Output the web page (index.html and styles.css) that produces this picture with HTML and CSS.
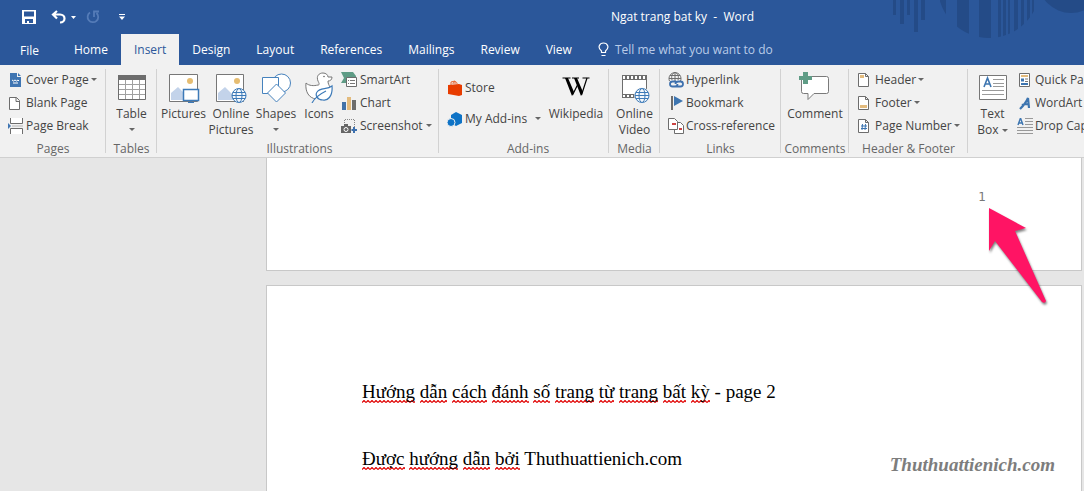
FILE: index.html
```html
<!DOCTYPE html>
<html lang="en">
<head>
<meta charset="utf-8">
<title>Ngat trang bat ky - Word</title>
<link rel="stylesheet" href="styles.css">
</head>
<body>
<header class="top">
  <svg class="pattern" width="200" height="40" viewBox="884 0 200 40" aria-hidden="true">
    <defs><clipPath id="disc"><circle cx="989" cy="-13" r="51"/></clipPath></defs>
    <g fill="#244b87">
      <path d="M893 0h3v15h-3zM900 0h4v24h-4zM907 0h3v15h-3zM914 0h4v32h-4zM921 0h4v20h-4z"/>
      <path clip-path="url(#disc)" d="M940 0h6v20h-6zM957 0h12v40h-12zM979 0h12v40h-12zM998 0h3v40h-3zM1003 0h3v40h-3zM1008 0h2v40h-2zM1014 0h4v40h-4zM1021 0h3v40h-3zM1027 0h3v40h-3zM1032 0h2v40h-2z"/>
      <circle cx="1071" cy="-20" r="33"/>
    </g>
  </svg>
  <div class="titlebar">
    <div class="quick">
      <button class="qbtn" aria-label="Save"><svg width="14" height="14" viewBox="0 0 14 14"><path d="M0 0h14v14H0zM2 1.500v5h10v-5zM3 9v4h2v-2h2v2h4V9z" fill="#fff" fill-rule="evenodd"/></svg></button>
      <button class="qbtn undo" aria-label="Undo"><svg width="15" height="14" viewBox="0 0 15 14"><path d="M6 1L2 4.500l4 4M2.500 4.500H9c6 0 6 8 0 8" fill="none" stroke="#fff" stroke-width="2.200"/></svg></button>
      <button class="qbtn more" aria-label="Undo list"><svg width="5" height="3" viewBox="0 0 5 3"><path d="M0 0h5L2.500 3z" fill="#fff"/></svg></button>
      <button class="qbtn redo" aria-label="Repeat"><svg width="14" height="14" viewBox="0 0 14 14"><path d="M4 2.500A5.300 5.300 0 1 0 10.500 3M8 7V1.500h5" fill="none" stroke="#557cb8" stroke-width="1.800"/></svg></button>
      <button class="qbtn custom" aria-label="Customize Quick Access Toolbar"><svg width="6" height="6" viewBox="0 0 6 6"><path d="M0 0h6v1H0zM0 2.500h6L3 6z" fill="#fff"/></svg></button>
    </div>
    <h1 class="title">Ngat trang bat ky&nbsp; -&nbsp; Word</h1>
  </div>
  <nav class="tabs">
    <button class="tab file">File</button>
    <button class="tab">Home</button>
    <button class="tab active">Insert</button>
    <button class="tab">Design</button>
    <button class="tab">Layout</button>
    <button class="tab">References</button>
    <button class="tab">Mailings</button>
    <button class="tab">Review</button>
    <button class="tab">View</button>
    <button class="tab tell"><svg width="11" height="15" viewBox="0 0 11 15"><path d="M3.500 10.500V9C-1 5.500 1.500 1 5.500 1S12 5.500 7.500 9v1.500zM3.500 13.500h4" fill="none" stroke="#fff" stroke-width="1.200"/></svg>Tell me what you want to do</button>
  </nav>
</header>

<section class="ribbon">
  <div class="group g-pages">
    <div class="items"><div class="stack">
      <button class="small"><svg width="16" height="16" viewBox="0 0 16 16"><path d="M2 1h7v4h4v10H2zM10 1l3 3h-3z" fill="#3f75b2"/><path d="M4 8l1.500 1L7 8l1.500 1L10 8l1 1M5 11h5" stroke="#fff" fill="none"/></svg>Cover Page<i class="caret"></i></button>
      <button class="small"><svg width="16" height="16" viewBox="0 0 16 16"><path d="M1.500 2.500h7l3 3v9h-10zM8 2.500v4h3.500" fill="#fff" stroke="#6d6d6d"/></svg>Blank Page</button>
      <button class="small"><svg width="16" height="16" viewBox="0 0 16 16"><path d="M2.500 0v5.500h12V0M2.500 16v-5.500h12V16" fill="#fff" stroke="#6d6d6d"/><path d="M0 5l3 3-3 3z" fill="#3f75b2"/><path d="M4 8h11" stroke="#b5b5b5"/></svg>Page Break</button>
    </div></div>
    <div class="label">Pages</div>
  </div>
  <div class="group g-tables">
    <div class="items">
      <button class="large"><svg width="32" height="32" viewBox="0 0 32 32"><path d="M2.500 4.500h27v24h-27z" fill="#fff" stroke="#6d6d6d"/><path d="M2 4h28v5H2z" fill="#6d6d6d"/><path d="M9.500 9v19M16.500 9v19M23.500 9v19M3 13.500h26M3 18.500h26M3 23.500h26" stroke="#a0a0a0"/></svg>Table<i class="caret"></i></button>
    </div>
    <div class="label">Tables</div>
  </div>
  <div class="group g-ill">
    <div class="items">
      <button class="large w-pic"><svg width="32" height="32" viewBox="0 0 32 32"><path d="M1.500 3.500h28v27h-28z" fill="#fff" stroke="#777"/><circle cx="22" cy="10" r="3" fill="#e6bd72"/><path d="M3 29V22l7-6 8 8v5z" fill="#c3d3ea"/><path d="M15.500 18.500h15v11h-15z" fill="#fff" stroke="#3d7ab8" stroke-width="1.500"/><path d="M23 29v3M20 31.500h6" stroke="#3d7ab8"/></svg>Pictures</button>
      <button class="large w-online"><svg width="32" height="32" viewBox="0 0 32 32"><path d="M1.500 3.500h27v27h-27z" fill="#fff" stroke="#777"/><circle cx="22" cy="10" r="3" fill="#e6bd72"/><path d="M3 29V22l7-6 8 8v5z" fill="#c3d3ea"/><g fill="#f4f8fc" stroke="#3d7ab8"><circle cx="24" cy="24.500" r="7"/><ellipse cx="24" cy="24.500" rx="3" ry="7"/><path d="M17 24.500h14M18 21.500h12M18 27.500h12"/></g></svg><span>Online<br>Pictures</span></button>
      <button class="large w-shapes"><svg width="32" height="32" viewBox="0 0 32 32"><g fill="#fff" stroke="#4682bd"><circle cx="21.500" cy="12" r="9"/><path d="M2.500 6.500h16v16h-16z"/><path d="M16.500 13l9 9-9 9-9-9z"/></g></svg>Shapes<i class="caret"></i></button>
      <button class="large w-icons"><svg width="32" height="32" viewBox="0 0 32 32"><path d="M13 28C6 27 2 21 3 12c3 3 8 3 12 2 2 0 1-2 0-4-2-5 1-8 5-8 3 0 5 2 5 4h4c0 3-2 4-4 4 0 3 1 4 2 6" fill="#fff" stroke="#777"/><circle cx="21" cy="5.500" r=".8" fill="#666"/><path d="M29 15c1 11-5 15-9 14-6 0-8-5-6-8 3-5 10-2 15-6zM9 32c3-6 8-9 14-12" fill="#fff" stroke="#3d7ab8" stroke-width="1.200"/></svg>Icons</button>
      <div class="stack">
        <button class="small"><svg width="16" height="16" viewBox="0 0 16 16"><path d="M0 0h12l3 4v2H6v5H0l3-5z" fill="#5f9c86"/><path d="M5.500 5.500h10v9h-10z" fill="#fff" stroke="#6d6d6d"/><path d="M7 8.500h1M9 8.500h5M7 11.500h1M9 11.500h5" stroke="#777"/></svg>SmartArt</button>
        <button class="small"><svg width="16" height="16" viewBox="0 0 16 16"><path d="M1 7h4v8H1z" fill="#4272a8"/><path d="M6 2h4v13H6z" fill="#e3bb7d"/><path d="M11 5h4v10h-4z" fill="#6d6d6d"/></svg>Chart</button>
        <button class="small"><svg width="16" height="16" viewBox="0 0 16 16"><path d="M3.500 7V1.500h10V9" fill="none" stroke="#888" stroke-dasharray="1 1"/><path d="M0 8h3V6h4v2h3v7H0z" fill="#666"/><circle cx="5" cy="11.500" r="2" stroke="#fff" fill="#666"/><path d="M13 9v6M10.500 12h5.500" stroke="#3d70ae" stroke-width="2"/></svg>Screenshot<i class="caret"></i></button>
      </div>
    </div>
    <div class="label">Illustrations</div>
  </div>
  <div class="group g-add">
    <div class="items">
      <div class="stack addins">
        <button class="small"><svg width="16" height="16" viewBox="0 0 16 16"><path d="M1 5l11-1 3 1v10l-3 1-11-2z" fill="#e83c00"/><path d="M4 5V2l4-1v3M6 4c0-3 3-3 4-1v2" fill="none" stroke="#e8632f"/></svg>Store</button>
        <button class="small"><svg width="16" height="16" viewBox="0 0 16 16"><path d="M9 1l6 3v8l-6 3-5-3V4z" fill="#0e73c6"/><circle cx="4" cy="11.500" r="4" fill="#0e73c6" stroke="#f1f1f1"/></svg>My Add-ins<i class="caret far"></i></button>
      </div>
      <button class="large w-wiki"><svg width="32" height="32" viewBox="0 0 32 32"><path d="M2.500 7h8M12 7h7M22.500 7h7" stroke="#000" stroke-width="1.200"/><path d="M5 7h3l6 14-2 4zM14 7h3l6 14-2 4z" fill="#000"/><path d="M12.500 24l5-10M21.500 24l5.500-17" stroke="#000" stroke-width="1.200"/></svg>Wikipedia</button>
    </div>
    <div class="label">Add-ins</div>
  </div>
  <div class="group g-media">
    <div class="items">
      <button class="large"><svg width="32" height="32" viewBox="0 0 32 32"><path d="M4 4h25v23H4z" fill="#6d6d6d"/><path d="M5 9h23v14H5zM5 5h2v3H5zM9 5h2v3H9zM13 5h2v3h-2zM17 5h2v3h-2zM21 5h2v3h-2zM25 5h2v3h-2zM5 24h2v2H5zM9 24h2v2H9zM13 24h2v2h-2z" fill="#fff"/><circle cx="24" cy="24.500" r="8" fill="#f1f1f1"/><g fill="#f4f8fc" stroke="#3d7ab8"><circle cx="24" cy="24.500" r="7"/><ellipse cx="24" cy="24.500" rx="3" ry="7"/><path d="M17 24.500h14M18 21.500h12M18 27.500h12"/></g></svg><span>Online<br>Video</span></button>
    </div>
    <div class="label">Media</div>
  </div>
  <div class="group g-links">
    <div class="items"><div class="stack">
      <button class="small"><svg width="16" height="16" viewBox="0 0 16 16"><g fill="none" stroke="#6d6d6d"><path d="M1.500 9a6 6 0 1 1 11 0M1 6.500h12M2 3.500h10M7 0v9M4 8c-1-4 0-6 3-8 3 2 4 4 3 8"/></g><path d="M8 9.500H4.500a2.500 2.500 0 0 0 0 5h2c2 0 3-1 3-2.500M8 14.500h4.500a2.500 2.500 0 0 0 0-5h-2c-2 0-3 1-3 2.500" fill="none" stroke="#3d70ae" stroke-width="1.800"/></svg>Hyperlink</button>
      <button class="small"><svg width="16" height="16" viewBox="0 0 16 16"><path d="M4 1v14" stroke="#6d6d6d" stroke-width="2"/><path d="M6 1l9 5-9 5z" fill="#3d75b0"/></svg>Bookmark</button>
      <button class="small"><svg width="16" height="16" viewBox="0 0 16 16"><path d="M6.500 4.500h6l3 3v8h-9z" fill="#fff" stroke="#6d6d6d"/><path d="M.5.500h6l3 3v8h-9z" fill="#fff" stroke="#6d6d6d"/><path d="M4 5h4v2H4zM11 10h3v2h-3z" fill="#cc4343"/></svg>Cross-reference</button>
    </div></div>
    <div class="label">Links</div>
  </div>
  <div class="group g-comments">
    <div class="items">
      <button class="large"><svg width="32" height="32" viewBox="0 0 32 32"><path d="M6.500 5.500h21q2 0 2 2v13q0 2-2 2H15l-6 6v-6H4.500q-2 0-2-2V8" fill="#fff" stroke="#7a7a7a"/><path d="M0 5h4V1h5v4h4v4H9v4H4V9H0z" fill="#5f9c86"/></svg>Comment</button>
    </div>
    <div class="label">Comments</div>
  </div>
  <div class="group g-hf">
    <div class="items"><div class="stack">
      <button class="small"><svg width="16" height="16" viewBox="0 0 16 16"><path d="M1.500 1.500h7l3 3v10h-10zM8.500 1.500v3h3" fill="#fff" stroke="#6d6d6d"/><path d="M3 3h4v3H3z" fill="#e3bb7d"/></svg>Header<i class="caret"></i></button>
      <button class="small"><svg width="16" height="16" viewBox="0 0 16 16"><path d="M1.500 1.500h7l3 3v10h-10zM8.500 1.500v3h3" fill="#fff" stroke="#6d6d6d"/><path d="M3 10h7v3H3z" fill="#e3bb7d"/></svg>Footer<i class="caret"></i></button>
      <button class="small"><svg width="16" height="16" viewBox="0 0 16 16"><path d="M1.500 1.500h7l3 3v10h-10zM8.500 1.500v3h3" fill="#fff" stroke="#6d6d6d"/><path d="M5.500 6L5 12M8.500 6L8 12M4 8h6M4 10.500h6" stroke="#3d75b0"/></svg>Page Number<i class="caret"></i></button>
    </div></div>
    <div class="label">Header &amp; Footer</div>
  </div>
  <div class="group g-text">
    <div class="items">
      <button class="large w-box"><svg width="32" height="32" viewBox="0 0 32 32"><path d="M2.500 4.500h27v24h-27z" fill="#fff" stroke="#777"/><path d="M7 16l3.500-9 3.500 9M8 13h5" stroke="#3d75b0" stroke-width="1.600" fill="none"/><path d="M16 8.500h11M16 12.500h11M16 15.500h11M5 19.500h22M5 23.500h22" stroke="#9a9a9a"/></svg><span>Text<br>Box<i class="caret"></i></span></button>
      <div class="stack">
        <button class="small"><svg width="16" height="16" viewBox="0 0 16 16"><path d="M2.500 1.500h10v13h-10z" fill="#fff" stroke="#6d6d6d"/><path d="M4 3h7v2H4z" fill="#e3bb7d"/><path d="M4 6.500h3v3H4z" fill="#3d75b0"/><path d="M8 7h3M8 9.500h3" stroke="#777"/><path d="M4 11h7v2H4z" fill="#3d75b0"/></svg>Quick Parts</button>
        <button class="small"><svg width="16" height="16" viewBox="0 0 16 16"><path d="M3 14c3-3 6-6 8-11l1 10M5 10c2-1 4-1 7-1" stroke="#3d75b0" stroke-width="2.200" fill="none"/></svg>WordArt</button>
        <button class="small"><svg width="16" height="16" viewBox="0 0 16 16"><path d="M1 7l2.500-7L6 7M2 5h3" stroke="#3d75b0" stroke-width="1.400" fill="none"/><path d="M8 .5h8M8 3.500h8M8 6.500h8M0 9.500h16M0 12.500h16M0 15.500h16" stroke="#999"/></svg>Drop Cap</button>
      </div>
    </div>
  </div>
</section>

<main class="canvas">
  <article class="page first"><span class="number">1</span></article>
  <article class="page second">
    <p><u>Hướng</u> <u>dẫn</u> <u>cách</u> <u>đánh</u> <u>số</u> <u>trang</u> <u>từ</u> <u>trang</u> <u>bất</u> <u>kỳ</u> - page 2</p>
    <p><u>Được</u> <u>hướng</u> <u>dẫn</u> <u>bởi</u> Thuthuattienich.com</p>
  </article>
  <svg class="pointer" width="66" height="104" viewBox="984 204 66 104" aria-hidden="true"><path d="M989 208l37 20-11 3 31 70q-1 3-4 1l-47-61-6 10z" fill="#ff1464"/></svg>
  <div class="watermark">Thuthuattienich.com</div>
</main>
</body>
</html>
```
FILE: styles.css
```css
* { box-sizing: border-box; }
body {
  margin: 0;
  height: 100vh;
  display: flex;
  flex-direction: column;
  overflow: hidden;
  font: 12px/16px "Open Sans", "Noto Sans", sans-serif;
  color: #444;
}
button {
  font: inherit;
  color: inherit;
  background: none;
  border: 0;
  padding: 0;
  margin: 0;
  white-space: nowrap;
}
svg { flex: none; display: block; }

.top { position: relative; background: #2b579a; color: #fff; }
.pattern { position: absolute; top: 0; right: 0; }
.titlebar { position: relative; display: flex; align-items: center; height: 34px; padding-right: 330px; }
.quick { display: flex; align-items: center; padding-left: 22px; flex: 1; }
.undo { margin-left: 15px; }
.more { margin-left: 5px; }
.redo { margin-left: 10px; }
.custom { margin-left: 19px; }
.title { margin: 0; font-size: 12px; font-weight: 400; }

.tabs { position: relative; display: flex; height: 31px; }
.tab { padding: 0 13px; }
.tab.file { padding: 2px 22px 0 20px; }
.tab.active { background: #f1f1f1; color: #2b579a; }
.tab.tell { display: flex; align-items: center; gap: 6px; color: #b9cbe8; }

.ribbon {
  display: flex;
  flex: none;
  background: #f1f1f1;
  border-bottom: 1px solid #d0d0d0;
  overflow: hidden;
}
.group { position: relative; flex: none; padding-top: 3px; }
.group::after {
  content: "";
  position: absolute;
  right: 0;
  top: 4px;
  bottom: 4px;
  width: 1px;
  background: #d2d2d2;
}
.items { display: flex; justify-content: center; height: 73px; }
.label { text-align: center; color: #666; }
.stack { display: flex; flex-direction: column; align-items: flex-start; flex: 1; }
.small { display: flex; align-items: center; gap: 2px; height: 23px; }
.large { display: flex; flex-direction: column; align-items: center; padding-top: 3px; }
.large > svg { margin-bottom: 3px; }
.caret {
  display: inline-block;
  flex: none;
  border: 3px solid transparent;
  border-top-color: #666;
  border-bottom: 0;
}
.large > .caret { margin-top: 6px; }
.large span .caret { margin: 0 0 2px 3px; }

.g-pages { width: 106px; padding-left: 8px; }
.g-pages .label { margin-left: -8px; }
.g-tables { width: 51px; }
.g-ill { width: 282px; padding-left: 3px; }
.g-add { width: 170px; padding-left: 8px; }
.g-media { width: 51px; }
.g-links { width: 121px; padding-left: 8px; }
.g-links .label { margin-left: -8px; }
.g-comments { width: 68px; }
.g-hf { width: 119px; padding-left: 8px; }
.g-ill .small { gap: 3px; }
.g-hf .label { margin-left: -8px; }
.g-text { width: 180px; }
.g-text .items { justify-content: flex-start; }
.w-pic { width: 47px; }
.w-online { width: 48px; }
.w-shapes { width: 42px; }
.w-icons { width: 44px; }
.w-wiki { width: 66px; }
.w-box { width: 49px; }
.addins { gap: 8px; padding-top: 8px; }
.far { margin-left: 6px; }

.canvas { position: relative; flex: 1; min-height: 0; padding: 0 2px 0 266px; background: #e6e6e6; overflow: hidden; }
.page { background: #fff; border: 1px solid #c8c8c8; }
.first { height: 113px; border-top: 0; padding: 31px 95px 0 0; text-align: right; }
.number { font: 12px/16px "DejaVu Sans", sans-serif; color: #777; }
.second { margin-top: 14px; padding: 92px 95px; height: 800px; color: #000; font: 19px/27px "Liberation Serif", serif; }
.second p { margin: 0 0 40px; }
.second u {
  text-decoration: none;
  padding-bottom: 1px;
  background: url("data:image/svg+xml,%3Csvg xmlns='http://www.w3.org/2000/svg' width='4' height='3'%3E%3Cpath d='M0 2.5L2 .5L4 2.5' fill='none' stroke='%23e00000' stroke-width='1.2'/%3E%3C/svg%3E") repeat-x left bottom;
}
.pointer { position: absolute; top: 46px; right: 34px; filter: drop-shadow(1px 2px 1px rgba(0, 0, 0, .5)); }
.watermark { position: absolute; right: 29px; bottom: 14px; font: italic bold 19px/24px "Liberation Serif", serif; color: #7d7d7d; }
```
